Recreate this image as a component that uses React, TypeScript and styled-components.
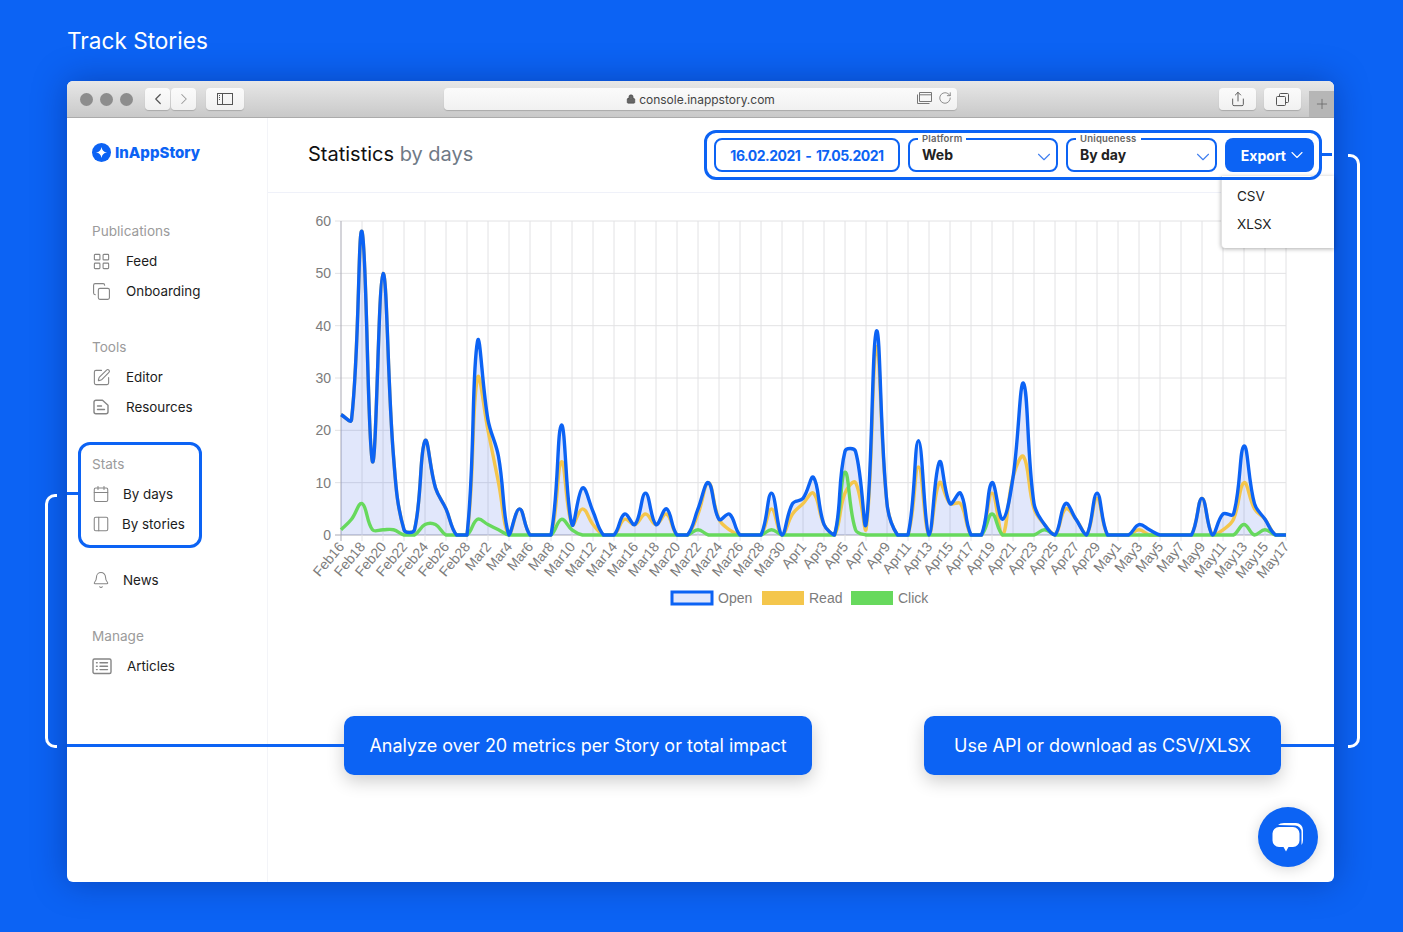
import styled, { createGlobalStyle } from "styled-components";
import {
  Bell,
  Calendar,
  ChevronDown,
  ChevronLeft,
  ChevronRight,
  Copy,
  LayoutGrid,
  Lock,
  PanelLeft,
  Plus,
  RotateCw,
  Share,
  SquarePen,
} from "lucide-react";
import type { ReactNode } from "react";

const BLUE = "#0c63f4";

const GlobalStyle = createGlobalStyle`
  * { box-sizing: border-box; }
  html, body { margin: 0; padding: 0; }
  body { background: ${BLUE}; font-family: Inter, "Liberation Sans", sans-serif; color: #1c1c1c; }
`;

const Page = styled.div`
  width: 1403px;
  height: 932px;
  padding: 0 69px 0 67px;
  background: ${BLUE};
  overflow: hidden;
`;

const PageTitle = styled.h1`
  height: 81px;
  margin: 0;
  padding-top: 26px;
  font-size: 22.6px;
  line-height: 29px;
  font-weight: 400;
  color: #fff;
`;

const Window = styled.div`
  position: relative;
  width: 1267px;
  height: 801px;
  border-radius: 6px;
  background: #fff;
  box-shadow: 0 0 34px rgba(0, 20, 90, 0.38);
`;

const TitleBar = styled.div`
  position: relative;
  height: 37px;
  display: flex;
  align-items: flex-start;
  padding: 7px 33px 0 13px;
  border-radius: 6px 6px 0 0;
  background: linear-gradient(#e7e7e7, #c9c9c9);
  border-bottom: 1px solid #ababab;
`;

const Light = styled.span`
  width: 13px;
  height: 13px;
  margin: 5px 7px 0 0;
  border-radius: 50%;
  background: #8d8d8d;
`;

const ToolButton = styled.div<{ $w: number; $ml?: number }>`
  width: ${(p) => p.$w}px;
  height: 22px;
  margin-left: ${(p) => p.$ml ?? 0}px;
  display: flex;
  align-items: center;
  justify-content: center;
  border-radius: 4px;
  background: linear-gradient(#fbfbfb, #f1f1f1);
  box-shadow: 0 1px 1px rgba(0, 0, 0, 0.18);
  color: #555;
`;

const UrlBar = styled.div`
  position: relative;
  width: 513px;
  height: 22px;
  margin-left: 200px;
  display: flex;
  align-items: center;
  justify-content: center;
  gap: 3px;
  border-radius: 4px;
  background: linear-gradient(#fbfbfb, #f1f1f1);
  box-shadow: 0 1px 1px rgba(0, 0, 0, 0.18);
  font-size: 12px;
  color: #444;
`;

const UrlTools = styled.div`
  position: absolute;
  right: 5px;
  top: 3px;
  display: flex;
  align-items: center;
  gap: 6px;
  color: #777;
`;

const NewTab = styled.div`
  position: absolute;
  right: 0;
  bottom: 0;
  width: 25px;
  height: 26px;
  display: flex;
  align-items: center;
  justify-content: center;
  background: #b6b6b6;
  color: #666;
`;

const Body = styled.div`
  display: flex;
  height: 764px;
`;

const Sidebar = styled.aside`
  width: 201px;
  flex: none;
  padding: 25px 0 0 25px;
  border-right: 1px solid #f3f4f8;
`;

const Logo = styled.div`
  height: 19px;
  display: flex;
  align-items: center;
  gap: 4px;
  margin-bottom: 54px;
  font-size: 15px;
  font-weight: 800;
  color: ${BLUE};
`;

const Section = styled.section<{ $mb?: number }>`
  position: relative;
  margin-bottom: ${(p) => p.$mb ?? 26}px;
`;

const SectionLabel = styled.div`
  height: 30px;
  line-height: 30px;
  font-size: 13.6px;
  color: #9b9b9b;
`;

const Row = styled.div<{ $gap: number }>`
  height: 30px;
  display: flex;
  align-items: center;
  gap: ${(p) => p.$gap}px;
  font-size: 13.4px;
  color: #1c1c1c;

  svg {
    flex: none;
    color: #858585;
  }
`;

const StatsFrame = styled.div`
  position: absolute;
  left: -14px;
  top: -7px;
  width: 124px;
  height: 106px;
  border: 3px solid ${BLUE};
  border-radius: 12px;

  &::before {
    content: "";
    position: absolute;
    left: -14px;
    top: 47px;
    width: 14px;
    height: 3px;
    background: ${BLUE};
  }
`;

const Main = styled.main`
  position: relative;
  flex: 1;
`;

const Header = styled.header`
  position: relative;
  height: 75px;
  display: flex;
  align-items: flex-start;
  justify-content: space-between;
  padding: 12px 12px 0 40px;
  border-bottom: 1px solid #eff1f9;
`;

const Heading = styled.h2`
  margin: 12px 0 0;
  font-size: 20px;
  line-height: 24px;
  font-weight: 400;
  color: #111;

  span {
    color: #6f7a86;
  }
`;

const FilterFrame = styled.div`
  position: relative;
  z-index: 2;
  width: 618px;
  height: 50px;
  display: flex;
  gap: 8px;
  padding: 5px 5px 0 7px;
  border: 3px solid ${BLUE};
  border-radius: 12px;

  &::after {
    content: "";
    position: absolute;
    left: 100%;
    top: 20px;
    width: 13px;
    height: 3px;
    background: ${BLUE};
  }
`;

const DateField = styled.div`
  width: 186px;
  height: 34px;
  display: flex;
  align-items: center;
  justify-content: center;
  border: 2px solid ${BLUE};
  border-radius: 8px;
  font-size: 14px;
  font-weight: 700;
  letter-spacing: -0.5px;
  word-spacing: 2px;
  color: ${BLUE};
`;

const SelectField = styled.div<{ $w: number }>`
  position: relative;
  width: ${(p) => p.$w}px;
  height: 34px;
  padding: 6px 0 0 12px;
  border: 2px solid ${BLUE};
  border-radius: 8px;
  font-size: 14px;
  line-height: 18px;
  font-weight: 700;
  color: #222;

  svg {
    position: absolute;
    right: 1px;
    top: 6px;
    color: #3f7ef0;
  }
`;

const FieldLegend = styled.span`
  position: absolute;
  left: 8px;
  top: -7px;
  padding: 0 4px;
  background: #fff;
  font-size: 9.5px;
  line-height: 11px;
  font-weight: 600;
  letter-spacing: 0.2px;
  color: #666;
`;

const ExportButton = styled.div`
  width: 89px;
  height: 34px;
  display: flex;
  align-items: center;
  justify-content: flex-end;
  gap: 1px;
  padding: 0 7px 0 0;
  border-radius: 8px;
  background: ${BLUE};
  font-size: 14px;
  font-weight: 700;
  color: #fff;
`;

const Dropdown = styled.div`
  position: absolute;
  z-index: 1;
  right: 0;
  top: 58px;
  width: 113px;
  height: 72px;
  padding: 6px 0 0 15px;
  background: #fff;
  border-radius: 0 0 0 4px;
  border-left: 1px solid #e2e2e2;
  box-shadow: 0 1px 4px rgba(0, 0, 0, 0.32);
  font-size: 13.5px;
  line-height: 28px;
  color: #222;
`;

const ChartSvg = styled.svg`
  display: block;
`;

const GridLine = styled.line<{ $dark?: boolean }>`
  stroke: ${(p) => (p.$dark ? "#a9a9b4" : "#e2e2e4")};
  stroke-width: 1;
`;

const AxisText = styled.text`
  font-family: "Liberation Sans", Arial, sans-serif;
  font-size: 14px;
  fill: #7c7c7c;
`;

const Curve = styled.path<{ $color: string }>`
  fill: none;
  stroke: ${(p) => p.$color};
  stroke-width: 3.4;
  stroke-linejoin: round;
`;

const Area = styled.path`
  fill: rgba(45, 85, 225, 0.14);
  stroke: none;
`;

const Callouts = styled.div`
  display: flex;
  gap: 112px;
  margin: 103px 0 0 76px;
`;

const Callout = styled.div<{ $w: number }>`
  position: relative;
  z-index: 1;
  width: ${(p) => p.$w}px;
  height: 59px;
  display: flex;
  align-items: center;
  justify-content: center;
  border-radius: 10px;
  background: ${BLUE};
  box-shadow: 0 6px 18px rgba(0, 0, 0, 0.2);
  font-size: 18px;
  color: #fff;
`;

const Connector = styled.span<{ $side: "left" | "right"; $w: number }>`
  position: absolute;
  top: 28px;
  ${(p) => p.$side}: -${(p) => p.$w}px;
  width: ${(p) => p.$w}px;
  height: 3px;
  background: ${BLUE};
`;

const Bracket = styled.span<{ $side: "left" | "right"; $top: number; $h: number; $off: number }>`
  position: absolute;
  top: ${(p) => p.$top}px;
  ${(p) => p.$side}: -${(p) => p.$off}px;
  width: 12px;
  height: ${(p) => p.$h}px;
  border: 3px solid #fff;
  border-${(p) => (p.$side === "left" ? "right" : "left")}: none;
  border-radius: ${(p) => (p.$side === "left" ? "10px 0 0 10px" : "0 10px 10px 0")};
`;

const ChatButton = styled.div`
  position: absolute;
  right: 16px;
  bottom: 15px;
  width: 60px;
  height: 60px;
  display: flex;
  align-items: center;
  justify-content: center;
  border-radius: 50%;
  background: ${BLUE};
  box-shadow: 0 2px 14px rgba(0, 0, 0, 0.16);
`;

// chart geometry, in page coordinates (the svg viewBox starts at the main column)
const X0 = 341;
const STEP = 10.5;
const BASE = 535;
const UNIT = 5.233;

const open = [
  23, 22, 58, 14, 50, 15, 1, 1, 18, 9, 5, 0, 0, 37, 22, 15, 0, 5, 0, 0, 0, 21, 2, 9, 4.5, 0, 0, 4, 2, 8, 2,
  5, 0, 0, 5, 10, 3, 4, 0, 0, 0, 8, 0, 6, 7, 11, 2, 0, 16, 16, 2, 39, 6, 0, 0, 18, 0, 14, 6, 8, 0, 0, 10, 3,
  11, 29, 6, 2, 0, 6, 3, 0, 8, 0, 0, 0, 2, 1, 0, 0, 0, 0, 7, 0, 4, 4, 17, 6, 3, 0, 0,
];

const read = [
  23, 22, 58, 14, 50, 15, 1, 1, 18, 9, 5, 0, 0, 30, 20, 10, 0, 5, 0, 0, 0, 14, 2, 5, 2, 0, 0, 3, 2, 4, 2,
  4, 0, 0, 4, 10, 3, 1, 0, 0, 0, 5, 0, 4, 6, 8, 2, 0, 8, 10, 1, 36, 6, 0, 0, 13, 0, 10, 6, 6, 0, 0, 8, 0,
  11, 15, 5, 2, 0, 5, 3, 0, 7, 0, 0, 0, 1, 0, 0, 0, 0, 0, 7, 0, 1, 3, 10, 5, 3, 0, 0,
];

const click = [
  1, 3, 6, 1, 1, 1, 0, 0, 2, 2, 0, 0, 0, 3, 2, 1, 0, 0, 0, 0, 0, 3, 1, 0, 0, 0, 0, 0, 0, 0, 0,
  0, 0, 0, 1, 0, 0, 0, 0, 0, 0, 1, 0, 0, 0, 0, 0, 0, 12, 1, 0, 0, 0, 0, 0, 0, 0, 0, 0, 0, 0, 0, 4, 0,
  0, 0, 0, 1, 0, 0, 0, 0, 0, 0, 0, 0, 0, 0, 0, 0, 0, 0, 0, 0, 0, 0, 2, 0, 1, 0, 0,
];

const MONTHS = ["Jan", "Feb", "Mar", "Apr", "May"];

const labels = open.map((_, i) => {
  const d = new Date(Date.UTC(2021, 1, 16 + i));
  return `${MONTHS[d.getUTCMonth()]}${d.getUTCDate()}`;
});

const toPoint = (v: number, i: number) => ({ x: X0 + i * STEP, y: BASE - v * UNIT });

// same spline the chart library uses (tension 0.4), capped to the plot area
const curvePath = (values: number[]) => {
  const pts = values.map(toPoint);
  const cps = pts.map((cur, i) => {
    const prev = pts[i - 1] ?? cur;
    const next = pts[i + 1] ?? cur;
    const d01 = Math.hypot(cur.x - prev.x, cur.y - prev.y);
    const d12 = Math.hypot(next.x - cur.x, next.y - cur.y);
    const sum = d01 + d12 || 1;
    const fa = (0.4 * d01) / sum;
    const fb = (0.4 * d12) / sum;
    const cap = (y: number) => Math.min(BASE, y);
    return {
      inX: cur.x - fa * (next.x - prev.x),
      inY: cap(cur.y - fa * (next.y - prev.y)),
      outX: cur.x + fb * (next.x - prev.x),
      outY: cap(cur.y + fb * (next.y - prev.y)),
    };
  });
  let d = `M${pts[0].x} ${pts[0].y}`;
  for (let i = 1; i < pts.length; i++) {
    d += ` C${cps[i - 1].outX} ${cps[i - 1].outY} ${cps[i].inX} ${cps[i].inY} ${pts[i].x} ${pts[i].y}`;
  }
  return d;
};

const LogoMark = () => (
  <svg width="19" height="19" viewBox="0 0 20 20">
    <circle cx="10" cy="10" r="10" fill={BLUE} />
    <path d="M10 4.2 C10.6 7.8 12.2 9.4 15.8 10 C12.2 10.6 10.6 12.2 10 15.8 C9.4 12.2 7.8 10.6 4.2 10 C7.8 9.4 9.4 7.8 10 4.2Z" fill="#fff" />
  </svg>
);

const ResourcesIcon = () => (
  <svg width="18" height="18" viewBox="0 0 18 18" fill="none" stroke="currentColor" strokeWidth="1.4" strokeLinejoin="round" strokeLinecap="round">
    <path d="M2 4.2 A2 2 0 0 1 4 2.2 H10.5 L16 7.2 V13.8 A2 2 0 0 1 14 15.8 H4 A2 2 0 0 1 2 13.8Z" />
    <path d="M5.5 8 H9.5 M5.5 11.5 H12.5" />
  </svg>
);

const ArticlesIcon = () => (
  <svg width="20" height="18" viewBox="0 0 20 18" fill="none" stroke="currentColor" strokeWidth="1.4" strokeLinecap="round">
    <rect x="1" y="2" width="18" height="14.5" rx="1.5" />
    <path d="M4.5 5.8 H5.2 M8 5.8 H15.5 M4.5 9.2 H5.2 M8 9.2 H15.5 M4.5 12.6 H5.2 M8 12.6 H15.5" />
  </svg>
);

const SidebarToggleIcon = () => (
  <svg width="16" height="12" viewBox="0 0 16 12" fill="none" stroke="#555" strokeWidth="1">
    <rect x="0.5" y="0.5" width="15" height="11" />
    <path d="M5.5 0.5 V11.5" />
    <path d="M2 2.5 H4 M2 4.5 H4 M2 6.5 H4" strokeDasharray="1 1" />
  </svg>
);

const TabsIcon = () => (
  <svg width="13" height="13" viewBox="0 0 13 13" fill="none" stroke="#555" strokeWidth="1">
    <rect x="0.5" y="3.5" width="9" height="9" rx="1" />
    <path d="M3.5 3.5 V1.5 A1 1 0 0 1 4.5 0.5 H11.5 A1 1 0 0 1 12.5 1.5 V8.5 A1 1 0 0 1 11.5 9.5 H9.5" />
  </svg>
);

const ReaderIcon = () => (
  <svg width="15" height="13" viewBox="0 0 15 13" fill="none" stroke="#777" strokeWidth="1">
    <path d="M2.5 0.5 H14.5 V9.5 H2.5Z M2.5 2.8 H14.5" />
    <path d="M0.5 2.5 V11.5 H12.5" />
  </svg>
);

const ChatIcon = () => (
  <svg width="32" height="30" viewBox="0 0 32 30">
    <path d="M6 3 Q8 1 12 1 H24 A7 7 0 0 1 31 8 V18 Q31 21 29.5 23 V10 A6.5 6.5 0 0 0 23 3.5Z" fill="#fff" />
    <path d="M7 5 H21 A6.5 6.5 0 0 1 27.5 11.5 V18.5 A6.5 6.5 0 0 1 21 25 H16.5 L14 29.5 L11.5 25 H7 A6.5 6.5 0 0 1 0.5 18.5 V11.5 A6.5 6.5 0 0 1 7 5Z" fill="#fff" />
  </svg>
);

const NavRow = ({ icon, gap, children }: { icon: ReactNode; gap: number; children: ReactNode }) => (
  <Row $gap={gap}>
    {icon}
    <span>{children}</span>
  </Row>
);

const Chart = () => {
  const openPath = curvePath(open);
  const last = X0 + (open.length - 1) * STEP;

  return (
    <ChartSvg width="1066" height="420" viewBox="268 193 1066 420">
      {[0, 10, 20, 30, 40, 50, 60].map((v) => {
        const y = BASE - v * UNIT;
        return (
          <g key={v}>
            <GridLine x1={335} x2={last} y1={y} y2={y} $dark={v === 0} />
            <AxisText x={331} y={y + 5} textAnchor="end">
              {v}
            </AxisText>
          </g>
        );
      })}
      {labels.map((label, i) =>
        i % 2 === 0 ? (
          <g key={label}>
            <GridLine x1={X0 + i * STEP} x2={X0 + i * STEP} y1={221} y2={541} $dark={i === 0} />
            <AxisText textAnchor="end" transform={`translate(${X0 + i * STEP + 4} 547) rotate(-50)`}>
              {label}
            </AxisText>
          </g>
        ) : null
      )}
      <Area d={`${openPath} L${last} ${BASE} L${X0} ${BASE}Z`} />
      <Curve d={curvePath(read)} $color="#f4c64c" />
      <Curve d={curvePath(click)} $color="#67d95d" />
      <Curve d={openPath} $color={BLUE} />

      <rect x={672} y={592} width={40} height={12} fill="#e3e8fb" stroke={BLUE} strokeWidth={3} />
      <AxisText x={718} y={603}>Open</AxisText>
      <rect x={762} y={591} width={42} height={14} fill="#f4c64c" />
      <AxisText x={809} y={603}>Read</AxisText>
      <rect x={851} y={591} width={42} height={14} fill="#67d95d" />
      <AxisText x={898} y={603}>Click</AxisText>
    </ChartSvg>
  );
};

const App = () => (
  <>
    <GlobalStyle />
    <Page>
      <PageTitle>Track Stories</PageTitle>
      <Window>
        <TitleBar>
          <Light />
          <Light />
          <Light />
          <ToolButton $w={25} $ml={5}>
            <ChevronLeft size={18} strokeWidth={1.6} />
          </ToolButton>
          <ToolButton $w={25} $ml={1}>
            <ChevronRight size={18} strokeWidth={1.4} color="#999" />
          </ToolButton>
          <ToolButton $w={38} $ml={10}>
            <SidebarToggleIcon />
          </ToolButton>
          <UrlBar>
            <Lock size={10} fill="#666" strokeWidth={1.5} />
            console.inappstory.com
            <UrlTools>
              <ReaderIcon />
              <RotateCw size={14} strokeWidth={1.4} />
            </UrlTools>
          </UrlBar>
          <ToolButton $w={37} $ml={262}>
            <Share size={16} strokeWidth={1.4} />
          </ToolButton>
          <ToolButton $w={37} $ml={8}>
            <TabsIcon />
          </ToolButton>
          <NewTab>
            <Plus size={16} strokeWidth={1.2} />
          </NewTab>
        </TitleBar>
        <Body>
          <Sidebar>
            <Logo>
              <LogoMark />
              InAppStory
            </Logo>
            <Section>
              <SectionLabel>Publications</SectionLabel>
              <NavRow icon={<LayoutGrid size={19} strokeWidth={1.4} />} gap={15}>Feed</NavRow>
              <NavRow icon={<Copy size={19} strokeWidth={1.4} />} gap={15}>Onboarding</NavRow>
            </Section>
            <Section $mb={27}>
              <SectionLabel>Tools</SectionLabel>
              <NavRow icon={<SquarePen size={19} strokeWidth={1.4} />} gap={15}>Editor</NavRow>
              <NavRow icon={<ResourcesIcon />} gap={16}>Resources</NavRow>
            </Section>
            <Section>
              <StatsFrame />
              <SectionLabel>Stats</SectionLabel>
              <NavRow icon={<Calendar size={18} strokeWidth={1.4} />} gap={13}>By days</NavRow>
              <NavRow icon={<PanelLeft size={18} strokeWidth={1.4} />} gap={12}>By stories</NavRow>
            </Section>
            <Section>
              <NavRow icon={<Bell size={18} strokeWidth={1.4} />} gap={13}>News</NavRow>
            </Section>
            <Section>
              <SectionLabel>Manage</SectionLabel>
              <NavRow icon={<ArticlesIcon />} gap={15}>Articles</NavRow>
            </Section>
          </Sidebar>
          <Main>
            <Header>
              <Heading>
                Statistics <span>by days</span>
              </Heading>
              <FilterFrame>
                <DateField>16.02.2021 - 17.05.2021</DateField>
                <SelectField $w={150}>
                  <FieldLegend>Platform</FieldLegend>
                  Web
                  <ChevronDown size={22} strokeWidth={1.2} />
                </SelectField>
                <SelectField $w={151}>
                  <FieldLegend>Uniqueness</FieldLegend>
                  By day
                  <ChevronDown size={22} strokeWidth={1.2} />
                </SelectField>
                <ExportButton>
                  Export
                  <ChevronDown size={20} strokeWidth={1.3} />
                </ExportButton>
              </FilterFrame>
              <Dropdown>
                <div>CSV</div>
                <div>XLSX</div>
              </Dropdown>
            </Header>
            <Chart />
            <Callouts>
              <Callout $w={468}>
                <Connector $side="left" $w={277} />
                Analyze over 20 metrics per Story or total impact
              </Callout>
              <Callout $w={357}>
                <Connector $side="right" $w={53} />
                Use API or download as CSV/XLSX
              </Callout>
            </Callouts>
          </Main>
        </Body>
        <ChatButton>
          <ChatIcon />
        </ChatButton>
        <Bracket $side="left" $top={413} $h={254} $off={22} />
        <Bracket $side="right" $top={73} $h={594} $off={26} />
      </Window>
    </Page>
  </>
);

export default App;
